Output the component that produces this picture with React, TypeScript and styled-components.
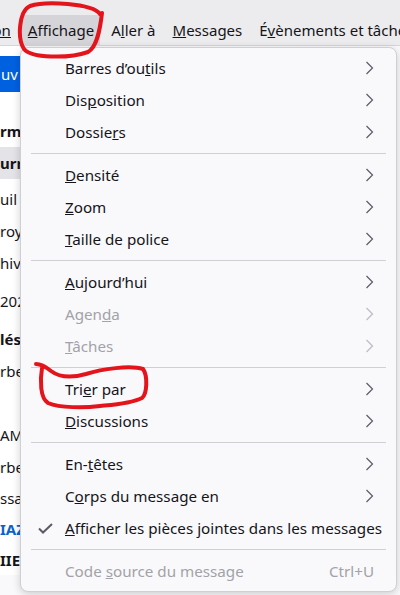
import React from "react";
import styled, { createGlobalStyle } from "styled-components";

const Global = createGlobalStyle`
  html, body { margin: 0; padding: 0; background: #f9f9fb; }
  body { font-family: "Noto Sans", "Open Sans", sans-serif; }
`;

const FONT = `"Noto Sans", "Open Sans", sans-serif`;

const Screen = styled.div`
  position: relative;
  width: 400px;
  height: 595px;
  overflow: hidden;
  background: #f9f9fb;
  font-family: ${FONT};
  color: #15141a;
`;

const MenuBar = styled.div`
  display: flex;
  align-items: stretch;
  height: 46px;
  background: #ececee;
  border-bottom: 1px solid #d6d6da;
  padding-top: 15px;
  box-sizing: border-box;
  margin-left: -16px;
  white-space: nowrap;
`;

const BarItem = styled.div<{ $active?: boolean }>`
  display: flex;
  align-items: center;
  padding: 0 6px;
  margin: 0 2.5px;
  font-size: 15px;
  color: #15141a;
  background: ${(p) => (p.$active ? "#d5d5d9" : "transparent")};
`;

const Body = styled.div`
  display: flex;
  flex-direction: column;
  background: #ffffff;
  width: 20px;
`;

const Row = styled.div<{ $h: number; $mt?: number; $band?: boolean; $bold?: boolean; $blue?: boolean }>`
  display: flex;
  align-items: center;
  height: ${(p) => p.$h}px;
  margin-top: ${(p) => p.$mt ?? 0}px;
  background: ${(p) => (p.$band ? "#e4e4e8" : "transparent")};
  font-size: 15px;
  font-weight: ${(p) => (p.$bold ? 700 : 400)};
  color: ${(p) => (p.$blue ? "#0a63c9" : "#15141a")};
  white-space: nowrap;
  overflow: hidden;
`;

const NewButton = styled.div`
  display: flex;
  align-items: center;
  height: 36px;
  margin-top: 10px;
  background: #0061e0;
  color: #ffffff;
  font-size: 15px;
  padding-left: 1px;
  overflow: hidden;
  white-space: nowrap;
`;

const Menu = styled.div`
  position: absolute;
  left: 20px;
  top: 47px;
  width: 377px;
  box-sizing: border-box;
  background: #f9f9fb;
  border: 1px solid #cfcfd6;
  border-radius: 8px;
  box-shadow: 0 2px 8px rgba(0, 0, 0, 0.18);
  padding: 4px 0 4px;
  display: flex;
  flex-direction: column;
`;

const Item = styled.div<{ $disabled?: boolean }>`
  display: grid;
  grid-template-columns: 44px 1fr auto;
  align-items: center;
  height: 32px;
  font-size: 15.2px;
  color: ${(p) => (p.$disabled ? "#a2a2a8" : "#15141a")};
  padding-right: 22px;
  white-space: nowrap;
`;

const CheckCell = styled.div`
  display: flex;
  justify-content: flex-end;
  padding-right: 12px;
  color: #5b5b66;
`;

const Label = styled.span``;

const Shortcut = styled.span`
  color: #a2a2a8;
  font-size: 15.2px;
`;

const Separator = styled.div`
  height: 1px;
  background: #cfcfd6;
  margin: 5px 10px;
`;

const Chevron = ({ disabled }: { disabled?: boolean }) => (
  <svg width="9" height="14" viewBox="0 0 9 14" fill="none">
    <path d="M1.5 1 L7.5 7 L1.5 13" stroke={disabled ? "#bcbcc2" : "#5b5b66"} strokeWidth="1.2" />
  </svg>
);

const Check = () => (
  <svg width="15" height="11" viewBox="0 0 15 11" fill="none">
    <path d="M1 5.5 L5 9.5 L14 1" stroke="#5b5b66" strokeWidth="2" />
  </svg>
);

const Annotation = styled.svg`
  position: absolute;
  left: 0;
  top: 0;
  width: 400px;
  height: 595px;
  pointer-events: none;
`;

type MI = { pre: string; key: string; post: string; sub?: boolean; disabled?: boolean; check?: boolean; shortcut?: string } | "sep";

const items: MI[] = [
  { pre: "Barres d’ou", key: "t", post: "ils", sub: true },
  { pre: "Dis", key: "p", post: "osition", sub: true },
  { pre: "Dossie", key: "r", post: "s", sub: true },
  "sep",
  { pre: "", key: "D", post: "ensité", sub: true },
  { pre: "", key: "Z", post: "oom", sub: true },
  { pre: "", key: "T", post: "aille de police", sub: true },
  "sep",
  { pre: "", key: "A", post: "ujourd’hui", sub: true },
  { pre: "Agen", key: "d", post: "a", sub: true, disabled: true },
  { pre: "", key: "T", post: "âches", sub: true, disabled: true },
  "sep",
  { pre: "Tri", key: "e", post: "r par", sub: true },
  { pre: "", key: "D", post: "iscussions", sub: true },
  "sep",
  { pre: "En-", key: "t", post: "êtes", sub: true },
  { pre: "C", key: "o", post: "rps du message en", sub: true },
  { pre: "", key: "A", post: "fficher les pièces jointes dans les messages", check: true },
  "sep",
  { pre: "Code ", key: "s", post: "ource du message", disabled: true, shortcut: "Ctrl+U" },
];

export default function App() {
  return (
    <Screen>
      <Global />
      <MenuBar>
        <BarItem><u>on</u></BarItem>
        <BarItem $active><span><u>A</u>ffichage</span></BarItem>
        <BarItem><span>A<u>l</u>ler à</span></BarItem>
        <BarItem><span><u>M</u>essages</span></BarItem>
        <BarItem><span>É<u>v</u>ènements et tâches</span></BarItem>
      </MenuBar>
      <Body>
        <NewButton>uv</NewButton>
        <Row $h={32} $mt={23} $bold>rm</Row>
        <Row $h={32} $band $bold>urr</Row>
        <Row $h={32} $mt={4}>uil</Row>
        <Row $h={32}>roy</Row>
        <Row $h={32}>hiv</Row>
        <Row $h={32} $mt={6}>202</Row>
        <Row $h={32} $mt={6} $bold>lés</Row>
        <Row $h={32}>rbe</Row>
        <Row $h={32}></Row>
        <Row $h={32}>AM</Row>
        <Row $h={31}>rbe</Row>
        <Row $h={31}>ssa</Row>
        <Row $h={31} $bold $blue>IAZ</Row>
        <Row $h={31} $bold>IIE</Row>
      </Body>
      <Menu>
        {items.map((it, i) =>
          it === "sep" ? (
            <Separator key={i} />
          ) : (
            <Item key={i} $disabled={it.disabled}>
              <CheckCell>{it.check ? <Check /> : null}</CheckCell>
              <Label>
                {it.pre}
                <u>{it.key}</u>
                {it.post}
              </Label>
              {it.sub ? <Chevron disabled={it.disabled} /> : it.shortcut ? <Shortcut>{it.shortcut}</Shortcut> : <span />}
            </Item>
          )
        )}
      </Menu>
      <Annotation viewBox="0 0 400 595">
        <path
          d="M100 14 C 92 3, 45 1, 30 6 C 19 11, 17 38, 24 49 C 31 58, 68 59, 88 52 C 97 47, 100 30, 102 13"
          stroke="#e3141c"
          strokeWidth="4"
          fill="none"
          strokeLinecap="round"
        />
        <path
          d="M36 364 C 41 364, 46 367, 51 371 C 59 377, 72 378, 86 374 C 102 369, 130 365, 143 369 C 148 376, 147 394, 142 398 C 130 404, 110 405, 100 406 C 84 408, 60 408, 48 403 C 40 398, 40 380, 42 368"
          stroke="#e3141c"
          strokeWidth="4"
          fill="none"
          strokeLinecap="round"
        />
      </Annotation>
    </Screen>
  );
}
